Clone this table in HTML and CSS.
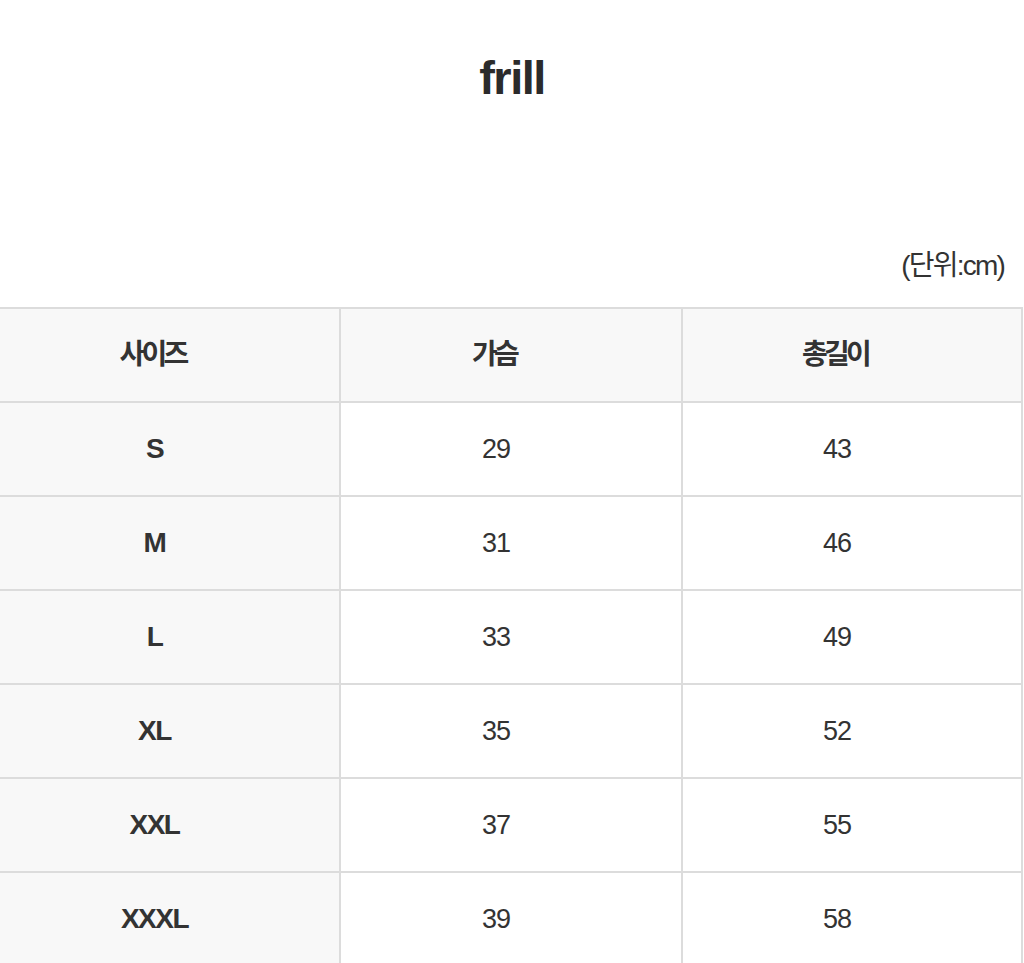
FILE: index.html
```html
<!DOCTYPE html>
<html lang="ko">
<head>
<meta charset="utf-8">
<title>frill</title>
<link rel="stylesheet" href="styles.css">
</head>
<body>
<h1 class="title">frill</h1>
<p class="unit">(단위:cm)</p>
<div class="size-table">
  <div class="cell head">사이즈</div>
  <div class="cell head">가슴</div>
  <div class="cell head">총길이</div>

  <div class="cell label">S</div>
  <div class="cell">29</div>
  <div class="cell">43</div>

  <div class="cell label">M</div>
  <div class="cell">31</div>
  <div class="cell">46</div>

  <div class="cell label">L</div>
  <div class="cell">33</div>
  <div class="cell">49</div>

  <div class="cell label">XL</div>
  <div class="cell">35</div>
  <div class="cell">52</div>

  <div class="cell label">XXL</div>
  <div class="cell">37</div>
  <div class="cell">55</div>

  <div class="cell label">XXXL</div>
  <div class="cell">39</div>
  <div class="cell">58</div>
</div>
</body>
</html>
```

FILE: styles.css
```css
html, body {
  margin: 0;
  padding: 0;
  background: #ffffff;
}

body {
  font-family: "Liberation Sans", "Noto Sans CJK KR", sans-serif;
  color: #333333;
  overflow: hidden;
}

.title {
  margin: 52px 0 0;
  text-align: center;
  font-size: 47px;
  line-height: 52px;
  font-weight: bold;
  letter-spacing: -1.5px;
  color: #2b2b2b;
}

.unit {
  margin: 147px 0 0;
  padding-right: 20px;
  text-align: right;
  font-size: 28px;
  line-height: 30px;
  letter-spacing: -1.8px;
  color: #333333;
}

.size-table {
  margin: 26px 0 0 -2px;
  display: grid;
  grid-template-columns: 341px 342px 340px;
  grid-auto-rows: 94px;
  border-top: 2px solid #dcdcdc;
  border-left: 2px solid #dcdcdc;
  width: max-content;
}

.cell {
  display: flex;
  align-items: center;
  justify-content: center;
  padding-right: 30px;
  border-right: 2px solid #dcdcdc;
  border-bottom: 2px solid #dcdcdc;
  font-size: 27px;
  letter-spacing: -1px;
  background: #ffffff;
  color: #333333;
}

.head {
  background: #f8f8f8;
  font-weight: bold;
  font-size: 28px;
  letter-spacing: -3.8px;
  padding-right: 34px;
  padding-bottom: 6px;
}

.label {
  background: #f8f8f8;
  font-weight: bold;
  font-size: 28px;
  letter-spacing: -1.5px;
}
```
